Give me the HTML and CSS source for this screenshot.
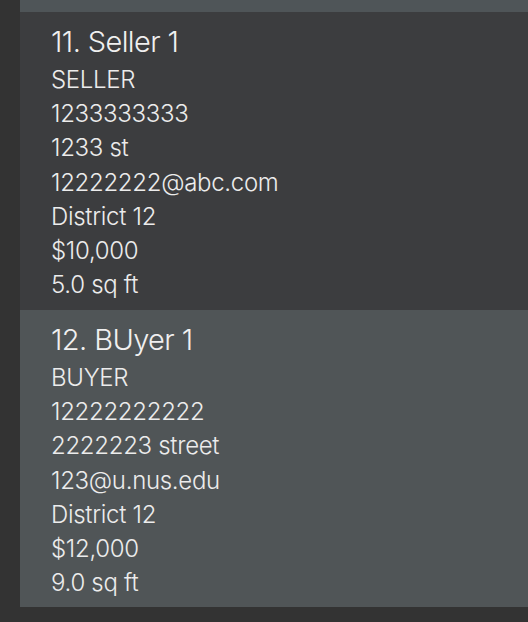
FILE: index.html
```html
<!DOCTYPE html>
<html>
<head>
<meta charset="utf-8">
<link rel="stylesheet" href="styles.css">
</head>
<body>
<div class="list">
  <div class="strip"></div>
  <div class="card dark">
    <div class="title">11. Seller 1</div>
    <div class="line">SELLER</div>
    <div class="line">1233333333</div>
    <div class="line">1233 st</div>
    <div class="line">12222222@abc.com</div>
    <div class="line">District 12</div>
    <div class="line">$10,000</div>
    <div class="line">5.0 sq ft</div>
  </div>
  <div class="card light">
    <div class="title">12. BUyer 1</div>
    <div class="line">BUYER</div>
    <div class="line">12222222222</div>
    <div class="line">2222223 street</div>
    <div class="line">123@u.nus.edu</div>
    <div class="line">District 12</div>
    <div class="line">$12,000</div>
    <div class="line">9.0 sq ft</div>
  </div>
</div>
</body>
</html>
```
FILE: styles.css
```css
html, body {
  margin: 0;
  padding: 0;
  background: #333333;
  height: 100%;
}
body {
  font-family: Inter, "Noto Sans", sans-serif;
  color: #ececec;
  overflow: hidden;
}
.list {
  margin-left: 20px;
  display: flex;
  flex-direction: column;
}
.strip {
  height: 12px;
  background: #4f5558;
}
.card {
  padding: 13px 0 0 31px;
  box-sizing: border-box;
}
.card.dark { background: #3c3d3f; height: 298px; }
.card.light { background: #505557; height: 297px; }
.title {
  font-size: 29px;
  line-height: 34px;
  margin-bottom: 4px;
  letter-spacing: -0.6px;
  font-weight: 300;
  color: #f0f0f0;
}
.line {
  font-size: 24px;
  line-height: 34.2px;
  letter-spacing: -0.3px;
  font-weight: 300;
}
```
